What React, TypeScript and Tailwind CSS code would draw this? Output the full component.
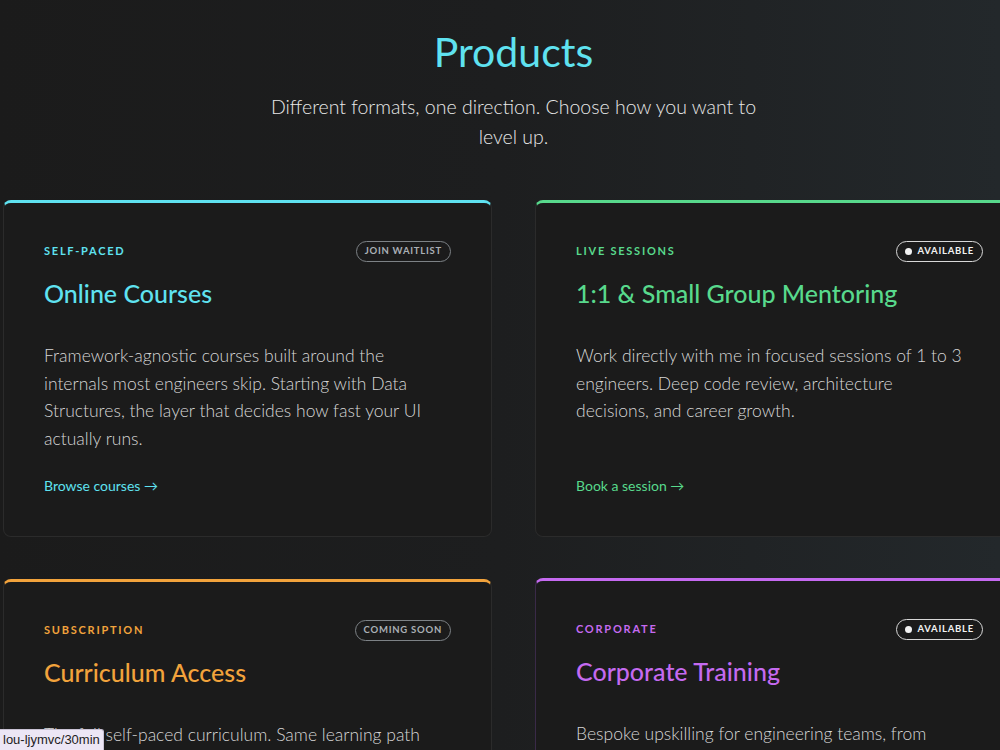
import clsx from "clsx";

const products = [
  {
    id: "courses",
    eyebrow: "Self-paced",
    title: "Online Courses",
    description:
      "Framework-agnostic courses built around the internals most engineers skip. Starting with Data Structures, the layer that decides how fast your UI actually runs.",
    cta: "Browse courses",
    status: "Join waitlist",
    available: false,
    accent: "text-[#5fe2f0]",
    topBorder: "border-t-[#5fe2f0]",
  },
  {
    id: "mentoring",
    eyebrow: "Live sessions",
    title: "1:1 & Small Group Mentoring",
    description:
      "Work directly with me in focused sessions of 1 to 3 engineers. Deep code review, architecture decisions, and career growth.",
    cta: "Book a session",
    status: "Available",
    available: true,
    accent: "text-[#58d98c]",
    topBorder: "border-t-[#58d98c]",
  },
  {
    id: "curriculum",
    eyebrow: "Subscription",
    title: "Curriculum Access",
    description:
      "The full self-paced curriculum. Same learning path as the courses, with every new module as it ships.",
    cta: "Get notified",
    status: "Coming soon",
    available: false,
    accent: "text-[#f2a33c]",
    topBorder: "border-t-[#f2a33c]",
  },
  {
    id: "corporate",
    eyebrow: "Corporate",
    title: "Corporate Training",
    description:
      "Bespoke upskilling for engineering teams, from workshops to multi-week programs tailored to your stack.",
    cta: "Talk to me",
    status: "Available",
    available: true,
    accent: "text-[#c56af0]",
    topBorder: "border-t-[#c56af0]",
    hovered: true,
  },
];

function StatusBadge({ label, available }: { label: string; available: boolean }) {
  return (
    <span
      className={clsx(
        "inline-flex h-[21px] items-center gap-[5px] rounded-full border px-[8px] text-[9.5px] font-bold tracking-[0.08em] uppercase",
        available ? "border-[#d8d8d8] text-[#f2f2f2]" : "border-[#7d8286] text-[#aab0b5]",
      )}
    >
      {available ? <span className="size-[7px] rounded-full bg-[#f2f2f2]" /> : null}
      {label}
    </span>
  );
}

export default function App() {
  return (
    <div className="h-[750px] w-full overflow-hidden bg-linear-to-r from-[#1b1b1b] via-[#1d1e1f] to-[#23282b] font-['Lato',sans-serif] text-[#e4e4e4]">
      <div className="w-[1027px] px-[3px]">
        <header className="flex flex-col items-center pt-[26px] text-center">
          <h1 className="text-[41px] leading-[52px] font-normal text-[#5fe2f0]">Products</h1>
          <p className="mt-[14px] max-w-[500px] text-[19.5px] leading-[30px] font-light text-[#e8e8e8]">
            Different formats, one direction. Choose how you want to level up.
          </p>
        </header>

        <div className="mt-[48px] grid grid-cols-2 gap-x-[43px] gap-y-[42px]">
          {products.map((item) => (
            <div
              key={item.id}
              className={clsx(
                "flex flex-col rounded-lg border border-t-[3px] bg-[#1b1b1b] px-[40px] pt-[38px] pb-[40px]",
                item.topBorder,
                item.hovered ? "-translate-y-[1px] border-[#3a2a48]" : "border-[#2b2b2b]",
              )}
            >
              <div className="flex items-center justify-between">
                <span className={clsx("text-[11px] font-bold tracking-[0.16em] uppercase", item.accent)}>
                  {item.eyebrow}
                </span>
                <StatusBadge label={item.status} available={item.available} />
              </div>

              <h2 className={clsx("mt-[15px] text-[25px] leading-[32px] font-medium", item.accent)}>
                {item.title}
              </h2>

              <p className="mt-[33px] max-w-[390px] flex-1 text-[17.5px] leading-[27.5px] font-light text-[#d6d6d6]">
                {item.description}
              </p>

              <a href="#" className={clsx("mt-[24px] text-[14px] leading-[20px] font-normal", item.accent)}>
                {item.cta} →
              </a>
            </div>
          ))}
        </div>
      </div>

      <div className="fixed bottom-0 left-0 rounded-tr-[3px] border-t border-r border-[#c9c2d4] bg-[#ece6f5] px-[3px] py-[2px] font-['Liberation_Sans',sans-serif] text-[13px] leading-[16px] text-[#222]">
        lou-ljymvc/30min
      </div>
    </div>
  );
}
